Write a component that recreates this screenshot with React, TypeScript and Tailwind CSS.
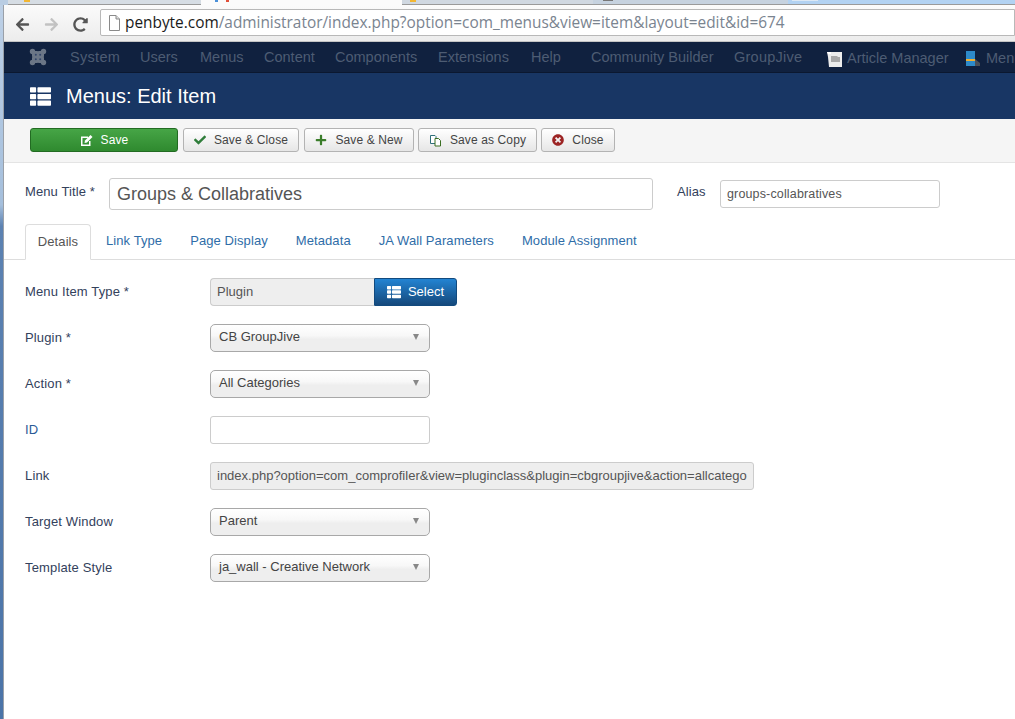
import React from "react";
import { FaThList, FaCheck, FaPlus, FaTimesCircle, FaArrowLeft, FaArrowRight, FaRedoAlt } from "react-icons/fa";

const font = { fontFamily: '"Liberation Sans", Arial, sans-serif' };

function Joomla() {
  return (
    <svg width="18" height="18" viewBox="0 0 18 18">
      <g fill="#6b7686">
        <circle cx="3.500" cy="3.500" r="2.700" />
        <circle cx="14.500" cy="3.500" r="2.700" />
        <circle cx="3.500" cy="14.500" r="2.700" />
        <circle cx="14.500" cy="14.500" r="2.700" />
        <rect x="3" y="3" width="12" height="12" />
      </g>
      <g fill="#10213f">
        <path d="M6.500 1 9 3.500 11.500 1zM6.500 17 9 14.500 11.500 17zM1 6.500 3.500 9 1 11.500zM17 6.500 14.500 9 17 11.500z" />
      </g>
      <g fill="#33466a">
        <circle cx="6.800" cy="6.800" r="1" />
        <circle cx="11.200" cy="6.800" r="1" />
        <circle cx="6.800" cy="11.200" r="1" />
        <circle cx="11.200" cy="11.200" r="1" />
      </g>
    </svg>
  );
}

function EditIcon() {
  return (
    <svg width="13" height="13" viewBox="0 0 13 13">
      <path d="M1 2.500h7v1.500H2.500v6.500H9V7h1.500v5H1z" fill="#fff" />
      <path d="M5 6.500 10.500 1 12.500 3 7 8.500 4.500 9z" fill="#fff" />
    </svg>
  );
}

function CopyIcon() {
  return (
    <svg width="13" height="13" viewBox="0 0 13 13" fill="none" stroke="#3b6e22" strokeWidth="1">
      <path d="M1.500 1.500h4.500l1 1v7h-5.500z" fill="#fff" stroke="#2f6f7a" />
      <path d="M6 4.500h3.500l2 2v5.500H6z" fill="#fff" stroke="#3b6e22" />
    </svg>
  );
}

function DocIcon() {
  return (
    <svg width="13" height="16" viewBox="0 0 13 16" fill="#fff" stroke="#8a8a8a">
      <path d="M1.500.5h6.500l3.500 3.500v11.500h-10z" />
      <path d="M8 .5v3.500h3.500" fill="#ddd" />
    </svg>
  );
}

function ArticleIcon() {
  return (
    <svg width="15" height="16" viewBox="0 0 15 16" className="mr-[5px] shrink-0">
      <path d="M0 1h15v15H2L1 6z" fill="#ececec" />
      <path d="M0 1h4v2H1z" fill="#ffffff" />
      <path d="M4 5h6l1 1h2v5H4z" fill="#a8a8a8" />
    </svg>
  );
}

function MenuIcon() {
  return (
    <svg width="15" height="16" viewBox="0 0 15 16" className="mr-[5px] shrink-0">
      <rect x="0" y="0" width="9" height="15" fill="#2d8ac9" />
      <rect x="0" y="8" width="9" height="2" fill="#f0b030" />
      <path d="M9 8l5 4v3H9z" fill="#4a4f58" />
    </svg>
  );
}

function ToolButton({ width, icon, label }: { width: string; icon: React.ReactNode; label: string }) {
  return (
    <div className={`${width} h-6 flex items-center justify-center gap-2 rounded-[3px] border border-[#b3b3b3] bg-gradient-to-b from-white to-[#e6e6e6] text-[12px] tracking-[0.12px] text-[#444]`}>
      {icon}
      <span>{label}</span>
    </div>
  );
}

function Row({ label, labelClass, children }: { label: string; labelClass?: string; children: React.ReactNode }) {
  return (
    <div className="flex items-center h-7">
      <div className={`w-[185px] text-[13px] tracking-[0.15px] ${labelClass ?? "text-[#33415c]"}`}>{label}</div>
      {children}
    </div>
  );
}

function Select({ value }: { value: string }) {
  return (
    <div className="w-[220px] h-7 pl-2 pr-[10px] flex items-center justify-between rounded-[5px] border border-[#a8a8a8] bg-[linear-gradient(#ffffff_0%,#f8f8f8_40%,#eeeeee_55%,#eeeeee_100%)] text-[13px] text-[#444]">
      <span className="-mt-[3px]">{value}</span>
      <span className="-mt-[3px] border-x-[3.500px] border-x-transparent border-t-[6px] border-t-[#888]" />
    </div>
  );
}

export default function App() {
  const navItems: [string, string][] = [
    ["System", "w-[70px] tracking-[0.3px]"],
    ["Users", "w-[60px]"],
    ["Menus", "w-[64px]"],
    ["Content", "w-[71px]"],
    ["Components", "w-[103px]"],
    ["Extensions", "w-[93px]"],
    ["Help", "w-[60px]"],
    ["Community Builder", "w-[143px]"],
    ["GroupJive", "w-[93px] tracking-[0.25px]"],
  ];
  const tabs = ["Link Type", "Page Display", "Metadata", "JA Wall Parameters", "Module Assignment"];

  return (
    <div style={font} className="w-[1015px] h-[719px] overflow-hidden bg-white flex flex-col">
      {/* browser tab strip */}
      <div className="h-[5px] flex shrink-0 bg-[#b2d2f2]">
        <div className="w-[8px] bg-[#b9cde3]" />
        <div className="w-[193px] pl-[16px] bg-[#d6dde4] border-b border-[#9a9a9a]">
          <div className="w-[6px] h-[2px] bg-[#f2b632]" />
        </div>
        <div className="w-[201px] pl-[14px] flex gap-[8px] bg-[#fbfbfb]">
          <div className="w-[3px] h-[2px] bg-[#4a90d9]" />
          <div className="w-[3px] h-[2px] bg-[#e0503a]" />
        </div>
        <div className="w-[191px] pl-[8px] bg-[#d0d8e1] border-b border-[#9a9a9a]">
          <div className="w-[6px] h-[2px] bg-[#f2b632]" />
        </div>
        <div className="w-[195px] pl-[10px] bg-[#c6d2df] border-b border-[#9a9a9a]">
          <div className="w-[10px] h-[1px] bg-[#777]" />
        </div>
        <div className="flex-1 border-b border-[#9a9a9a]">
          <div className="ml-[4px] w-[26px] h-[1px] bg-[#dce8f4]" />
        </div>
      </div>

      <div className="flex flex-1 min-h-0">
        {/* window frame */}
        <div className="w-[4px] shrink-0 border-r border-[#9aa0a8] bg-[linear-gradient(#bdd0e6_0%,#a5bfdc_28%,#5c82b2_31%,#4b74a8_100%)]" />

        <div className="flex-1 min-w-0 flex flex-col">
          {/* browser toolbar */}
          <div className="h-[37px] shrink-0 flex bg-gradient-to-b from-[#fbfbfb] to-[#ececec] border-b border-[#c4c4c4]">
            <div className="w-[96px] shrink-0 flex items-center pl-[11px] pt-[2px]">
              <FaArrowLeft size={15} color="#555" />
              <FaArrowRight size={15} color="#c2c2c2" className="ml-[14px]" />
              <FaRedoAlt size={15} color="#555" className="ml-[14px]" />
            </div>
            <div className="flex-1 h-[27px] mt-[4px] flex items-center gap-[4px] pl-[7px] bg-white border border-[#b8b8b8] rounded-l-[2px] whitespace-nowrap overflow-hidden">
              <DocIcon />
              <span style={{ fontFamily: '"Open Sans", sans-serif', fontSize: 15.4 }}>
                <span className="text-[#1a1a1a]">penbyte.com</span>
                <span className="text-[#7a8490]">/administrator/index.php?option=com_menus&amp;view=item&amp;layout=edit&amp;id=674</span>
              </span>
            </div>
          </div>

          {/* cms nav */}
          <div className="h-[31px] shrink-0 flex items-center bg-[#10213f] border-b border-[#0b1830] pl-[25px] pt-[1px] whitespace-nowrap overflow-hidden text-[14.500px] text-[#4d5c73]">
            <div className="w-[41px] shrink-0 -mt-[2px]"><Joomla /></div>
            {navItems.map(([t, w]) => (
              <div key={t} className={`${w} shrink-0`}>{t}</div>
            ))}
            <div className="shrink-0 flex items-center pt-[3px]">
              <ArticleIcon />
              <span className="w-[119px]">Article Manager</span>
              <MenuIcon />
              <span>Menus</span>
            </div>
          </div>

          {/* page title */}
          <div className="h-[46px] shrink-0 flex items-center bg-[#183664] pl-[26px] text-white">
            <FaThList size={21} className="mr-[15px]" />
            <span className="text-[20px]">Menus: Edit Item</span>
          </div>

          {/* action toolbar */}
          <div className="h-[44px] shrink-0 flex items-start pt-[9px] pl-[26px] gap-[5px] bg-[#f5f5f5] border-b border-[#e4e4e4]">
            <div className="w-[148px] h-6 flex items-center justify-center gap-2 rounded-[3px] border border-[#226b22] bg-gradient-to-b from-[#46a546] to-[#2f8a2f] text-[12px] tracking-[0.12px] text-white">
              <EditIcon />
              <span>Save</span>
            </div>
            <ToolButton width="w-[116px]" icon={<FaCheck size={12} color="#2f7d3a" />} label="Save & Close" />
            <ToolButton width="w-[110px]" icon={<FaPlus size={12} color="#3a7d2a" />} label="Save & New" />
            <div className="-ml-[1px]">
              <ToolButton width="w-[119px]" icon={<CopyIcon />} label="Save as Copy" />
            </div>
            <div className="-ml-[1px]">
              <ToolButton width="w-[74px]" icon={<FaTimesCircle size={12} color="#9c2424" />} label="Close" />
            </div>
          </div>

          {/* title row */}
          <div className="flex items-center shrink-0 pl-[21px] pt-[15px] h-[47px] text-[13px] tracking-[0.1px]">
            <div className="w-[84px] text-[#33415c] -mt-[4px]">Menu Title *</div>
            <div className="w-[544px] h-[32px] flex items-center pl-[7px] rounded-[3px] border border-[#cccccc] text-[18px] tracking-[0px] text-[#555]">Groups &amp; Collabratives</div>
            <div className="w-[67px] pl-[24px] text-[#33415c] -mt-[4px]">Alias</div>
            <div className="w-[220px] h-[28px] flex items-center pl-[6px] rounded-[3px] border border-[#cccccc] text-[12.500px] tracking-[0.15px] text-[#555]">groups-collabratives</div>
          </div>

          {/* tabs */}
          <div className="mt-[14px] h-[36px] shrink-0 flex items-stretch pl-[21px] border-b border-[#dddddd] text-[13px] tracking-[0.085px] text-[#2f6da8]">
            <div className="w-[66px] h-[36px] flex items-center justify-center rounded-t-[4px] border border-[#dddddd] border-b-white bg-white text-[#555]">Details</div>
            <div className="flex items-center pl-[15px] gap-[28px] pb-[1px]">
              {tabs.map((t) => (
                <span key={t}>{t}</span>
              ))}
            </div>
          </div>

          {/* form */}
          <div className="pl-[21px] pt-[18px] flex flex-col gap-[18px]">
            <Row label="Menu Item Type *">
              <div className="flex h-7">
                <div className="w-[164px] flex items-center pl-[6px] rounded-l-[4px] border border-r-0 border-[#cccccc] bg-[#eeeeee] text-[13px] text-[#555]">Plugin</div>
                <div className="w-[83px] flex items-center justify-center gap-[7px] rounded-r-[3px] border border-[#124a7e] bg-gradient-to-b from-[#2384d3] to-[#15497c] text-[13px] text-white">
                  <FaThList size={14} />
                  <span>Select</span>
                </div>
              </div>
            </Row>
            <Row label="Plugin *"><Select value="CB GroupJive" /></Row>
            <Row label="Action *"><Select value="All Categories" /></Row>
            <Row label="ID" labelClass="text-[#2a5a96]">
              <div className="w-[220px] h-7 rounded-[3px] border border-[#cccccc] bg-white" />
            </Row>
            <Row label="Link">
              <div className="w-[544px] h-7 flex items-center pl-[6px] rounded-[3px] border border-[#cccccc] bg-[#eeeeee] text-[13px] text-[#555] whitespace-nowrap overflow-hidden">
                index.php?option=com_comprofiler&amp;view=pluginclass&amp;plugin=cbgroupjive&amp;action=allcatego
              </div>
            </Row>
            <Row label="Target Window"><Select value="Parent" /></Row>
            <Row label="Template Style"><Select value="ja_wall - Creative Network" /></Row>
          </div>
        </div>
      </div>
    </div>
  );
}
